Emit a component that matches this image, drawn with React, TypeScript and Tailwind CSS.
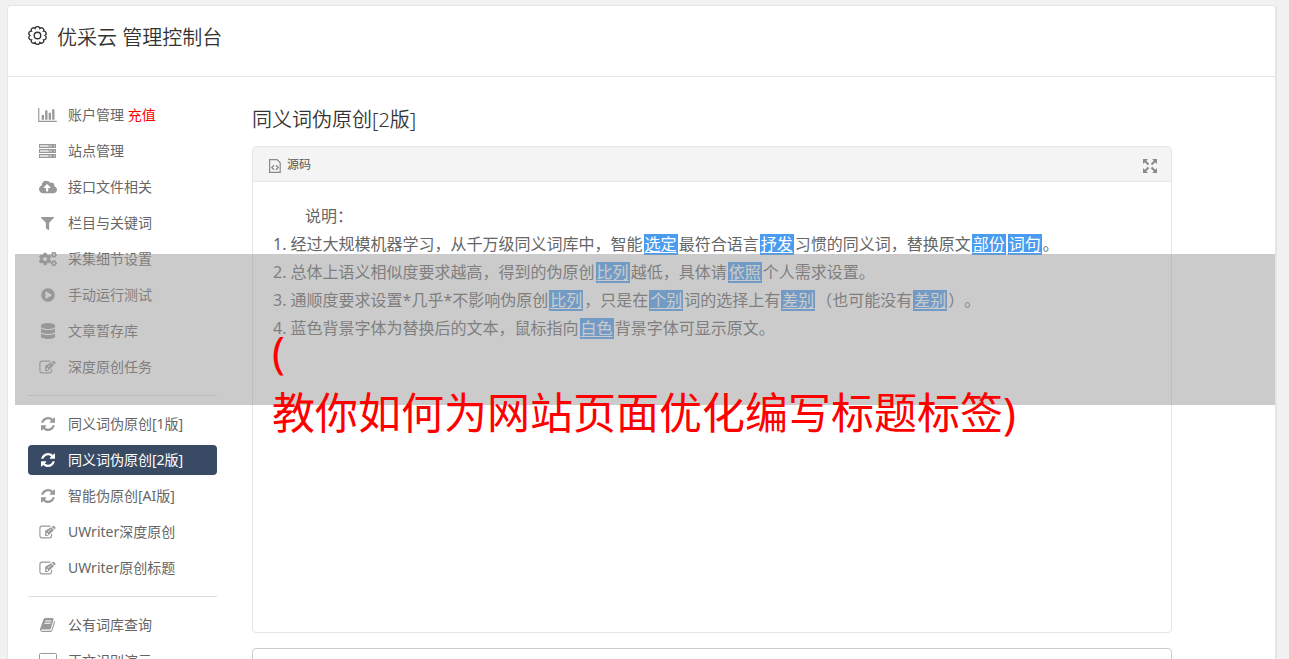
import type { ReactNode } from "react";
import { FaCloudUploadAlt, FaCogs, FaDatabase, FaFilter, FaPlayCircle } from "react-icons/fa";

// ten rounded teeth around a small ring
const gearPath = (() => {
  const point = (k: number) => {
    const a = ((36 * k - 72) * Math.PI) / 180;
    return `${(9 + 7.1 * Math.cos(a)).toFixed(2)} ${(9 + 7.1 * Math.sin(a)).toFixed(2)}`;
  };
  let d = `M${point(0)}`;
  for (let k = 1; k <= 10; k++) d += `A2.25 2.25 0 0 1 ${point(k)}`;
  return d + "Z";
})();

const GearIcon = () => (
  <svg viewBox="0 0 18 18" fill="none" stroke="currentColor" strokeWidth="1.3" className="mt-[3px] h-[19px] w-[19px]">
    <path d={gearPath} />
    <circle cx="9" cy="9" r="3.1" />
  </svg>
);

const BarChartIcon = () => (
  <svg viewBox="0 128 2048 1536" fill="currentColor" className="w-[19px] h-[14px]">
    <path d="M640 896v512H384V896h256zm384-512v1024H768V384h256zm1024 1152v128H0V128h128v1408h1920zm-640-896v768h-256V640h256zm384-384v1152h-256V256h256z" />
  </svg>
);

const ServerIcon = () => (
  <svg viewBox="0 0 17 14" className="w-[17px] h-3.5">
    {[0, 5, 10].map((y) => (
      <g key={y}>
        <rect x="0" y={y} width="17" height="4" fill="currentColor" />
        <rect x="1" y={y + 1} width="8" height="2" fill="white" opacity="0.65" />
        <rect x="9" y={y + 1} width="4" height="2" fill="white" opacity="0.35" />
        <rect x="15" y={y + 1} width="1" height="2" fill="white" opacity="0.5" />
      </g>
    ))}
  </svg>
);

const RefreshIcon = () => (
  <svg viewBox="0 0 1536 1536" fill="currentColor" className="w-3.5 h-3.5">
    <path d="M1511 928q0 5-1 7-64 268-268 434.5T764 1536q-146 0-282.5-55T238 1324l-129 129q-19 19-45 19t-45-19-19-45V960q0-26 19-45t45-19h448q26 0 45 19t19 45-19 45l-137 137q71 66 161 102t187 36q134 0 250-65t186-179q11-17 53-117 8-23 30-23h192q13 0 22.5 9.5t9.5 22.5zm25-800v448q0 26-19 45t-45 19h-448q-26 0-45-19t-19-45 19-45l138-138Q969 256 768 256q-134 0-250 65T332 500q-11 17-53 117-8 23-30 23H50q-13 0-22.5-9.5T18 608v-7q65-268 270-434.5T768 0q146 0 284 55.5T1297 212l130-129q19-19 45-19t45 19 19 45z" />
  </svg>
);

const EditIcon = () => (
  <svg viewBox="0 64 1792 1536" fill="currentColor" className="w-[17px] h-[14px]">
    <path d="M888 1184l116-116-152-152-116 116v56h96v96h56zm440-720q-16-16-33 1L945 815q-17 17-1 33t33-1l350-350q17-17 1-33zm80 594v190q0 119-84.5 203.5T1120 1536H288q-119 0-203.5-84.5T0 1248V416q0-119 84.5-203.5T288 128h832q63 0 117 25 15 7 18 23 3 17-9 29l-49 49q-14 14-32 8-23-6-45-6H288q-66 0-113 47t-47 113v832q0 66 47 113t113 47h832q66 0 113-47t47-113v-126q0-13 9-22l64-64q15-15 35-7t20 29zm-96-738l288 288-672 672H640V704zm444 132l-92 92-288-288 92-92q28-28 68-28t68 28l152 152q28 28 28 68t-28 68z" />
  </svg>
);

const BookIcon = () => (
  <svg viewBox="0 128 1664 1536" fill="currentColor" className="w-[15px] h-3.5">
    <path d="M1639 478q40 57 18 129l-275 906q-19 64-76.5 107.5T1183 1664H260q-77 0-148.5-53.5T12 1479q-24-67-2-127 0-4 3-27t4-37q1-8-3-21.5t-3-19.5q2-11 8-21t16.5-23.5T52 1179q23-38 45-91.5t30-91.5q3-10 .5-30t-.5-28q3-11 17-28t17-23q21-36 42-92t25-90q1-9-2.5-32t.5-28q4-13 22-30.5t22-22.5q19-26 42.5-84.5T340 411q1-8-3-25.5t-2-26.5q2-8 9-18t18-23 17-21q8-12 16.5-30.5t15-35 16-36 19.5-32T470 140t36-11.5 47.5 5.5l-1 3q38-9 51-9h761q74 0 114 56t18 130l-274 906q-36 119-71.5 153.5T1023 1408H154q-27 0-38 15-11 16-1 43 24 70 144 70h923q29 0 56-15.5t35-41.5l300-987q7-22 5-57 38 15 59 43zM575 480q-4 13 2 22.5t20 9.5h608q13 0 25.5-9.5T1247 480l21-64q4-13-2-22.5t-20-9.5H638q-13 0-25.5 9.5T596 416zm-83 256q-4 13 2 22.5t20 9.5h608q13 0 25.5-9.5t16.5-22.5l21-64q4-13-2-22.5t-20-9.5H555q-13 0-25.5 9.5T513 672z" />
  </svg>
);

const DesktopIcon = () => (
  <svg viewBox="0 0 18 16" fill="none" stroke="currentColor" className="w-[18px] h-4">
    <rect x="0.5" y="0.5" width="17" height="11" rx="1" />
    <path d="M7 12v3M11 12v3M5 15.5h8M1 9.5h16" />
  </svg>
);

const SourceIcon = () => (
  <svg viewBox="0 0 12 14" fill="none" stroke="#888" className="mt-0.5 w-3 h-3.5">
    <path d="M.6.6h7.4l3.2 3.2v9.6H.6z" strokeWidth="1.2" />
    <path d="M5 6.2L2.8 8.5 5 10.8M7 6.2l2.2 2.3L7 10.8" strokeWidth="1.3" />
  </svg>
);

const MaximizeIcon = () => (
  <svg viewBox="0 0 14 14" fill="#8a8a8a" stroke="#8a8a8a" className="mt-0.5 w-3.5 h-3.5">
    <path d="M0 0h5L0 5zM14 0v5L9 0zM0 14V9l5 5zM14 14H9l5-5z" stroke="none" />
    <path d="M1.5 1.5l4 4M12.5 1.5l-4 4M1.5 12.5l4-4M12.5 12.5l-4-4" strokeWidth="2" />
  </svg>
);

interface MenuItem {
  label: string;
  icon: ReactNode;
  extra?: string;
  active?: boolean;
}

const menuGroups: MenuItem[][] = [
  [
    { label: "账户管理", icon: <BarChartIcon />, extra: "充值" },
    { label: "站点管理", icon: <ServerIcon /> },
    { label: "接口文件相关", icon: <FaCloudUploadAlt className="w-[18px] h-4" /> },
    { label: "栏目与关键词", icon: <FaFilter className="w-[13px] h-[13px]" /> },
    { label: "采集细节设置", icon: <FaCogs className="w-[18px] h-4" /> },
    { label: "手动运行测试", icon: <FaPlayCircle className="w-3.5 h-3.5" /> },
    { label: "文章暂存库", icon: <FaDatabase className="w-3.5 h-4" /> },
    { label: "深度原创任务", icon: <EditIcon /> },
  ],
  [
    { label: "同义词伪原创[1版]", icon: <RefreshIcon /> },
    { label: "同义词伪原创[2版]", icon: <RefreshIcon />, active: true },
    { label: "智能伪原创[AI版]", icon: <RefreshIcon /> },
    { label: "UWriter深度原创", icon: <EditIcon /> },
    { label: "UWriter原创标题", icon: <EditIcon /> },
  ],
  [
    { label: "公有词库查询", icon: <BookIcon /> },
    { label: "正文识别演示", icon: <DesktopIcon /> },
  ],
];

const Mark = ({ children }: { children: ReactNode }) => (
  <span className="mx-px inline-block bg-[#4a9cf0] px-px leading-[21px] text-white underline underline-offset-2">
    {children}
  </span>
);

const Sidebar = () => (
  <nav className="w-[189px] shrink-0 pt-[23px] text-sm text-[#666]">
    {menuGroups.map((group, i) => (
      <ul
        key={i}
        className={i > 0 ? "mt-[13px] space-y-1.5 border-t border-[#ddd] pt-[13px]" : "space-y-1.5"}
      >
        {group.map((item) => (
          <li key={item.label}>
            <a
              href="#"
              className={
                item.active
                  ? "flex h-[30px] items-center rounded bg-[#394a64] pl-2.5 text-white"
                  : "flex h-[30px] items-center pl-2.5"
              }
            >
              <span
                className={
                  item.active
                    ? "mr-[11px] flex w-[19px] justify-center"
                    : "mr-[11px] flex w-[19px] justify-center text-[#999]"
                }
              >
                {item.icon}
              </span>
              <span className="whitespace-pre">
                {item.label}
                {item.extra && <span className="text-[#f00]"> {item.extra}</span>}
              </span>
            </a>
          </li>
        ))}
      </ul>
    ))}
  </nav>
);

const Editor = () => (
  <section className="h-[487px] rounded border border-[#e5e5e5]">
    <div className="flex h-[35px] items-center justify-between rounded-t border-b border-[#e5e5e5] bg-[#f4f4f4] pl-4 pr-3.5 pt-0.5">
      <button type="button" className="flex items-center gap-1.5 text-xs text-[#555]">
        <SourceIcon />
        源码
      </button>
      <button type="button" aria-label="全屏">
        <MaximizeIcon />
      </button>
    </div>
    <div className="px-5 pt-5 text-base leading-7 text-[#666] [text-spacing-trim:space-all]">
      <p className="indent-8">说明：</p>
      <p>
        1. 经过大规模机器学习，从千万级同义词库中，智能<Mark>选定</Mark>最符合语言<Mark>抒发</Mark>
        习惯的同义词，替换原文<Mark>部份</Mark><Mark>词句</Mark>。
      </p>
      <p>
        2. 总体上语义相似度要求越高，得到的伪原创<Mark>比列</Mark>越低，具体请<Mark>依照</Mark>
        个人需求设置。
      </p>
      <p>
        3. 通顺度要求设置*几乎*不影响伪原创<Mark>比列</Mark>，只是在<Mark>个别</Mark>
        词的选择上有<Mark>差别</Mark>（也可能没有<Mark>差别</Mark>）。
      </p>
      <p>
        4. 蓝色背景字体为替换后的文本，鼠标指向<Mark>白色</Mark>背景字体可显示原文。
      </p>
    </div>
  </section>
);

// translucent strip with the article headline, lies over the whole panel
const Banner = () => (
  <div className="pointer-events-none absolute left-[7px] right-0 top-[248px] h-[151px] bg-[#979797]/50 pl-[257px] pt-[67px] text-[43px] leading-[61px] text-[#f00]">
    <p>(</p>
    <p className="whitespace-nowrap">教你如何为网站页面优化编写标题标签)</p>
  </div>
);

export default function App() {
  return (
    <div className="h-screen overflow-hidden bg-[#f1f1f1] pl-[7px] pr-3 pt-[5px] font-['Noto_Sans','Noto_Sans_CJK_SC',sans-serif]">
      <div className="relative min-h-full rounded-t border border-r-2 border-b-0 border-[#e5e5e5] bg-white">
        <header className="flex h-[71px] items-start gap-2.5 border-b border-[#e5e5e5] pl-5 pt-[17px] text-[#333]">
          <GearIcon />
          <h1 className="text-xl leading-[30px] font-[350]">优采云 管理控制台</h1>
        </header>
        <div className="flex gap-[35px] pl-5">
          <Sidebar />
          <main className="mr-[103px] flex-1 pt-7">
            <h2 className="mb-[11px] text-xl leading-[30px] font-[350] text-[#333]">同义词伪原创[2版]</h2>
            <Editor />
            <section className="mt-[15px] h-40 rounded border border-[#ccc]" />
          </main>
        </div>
        <Banner />
      </div>
    </div>
  );
}
